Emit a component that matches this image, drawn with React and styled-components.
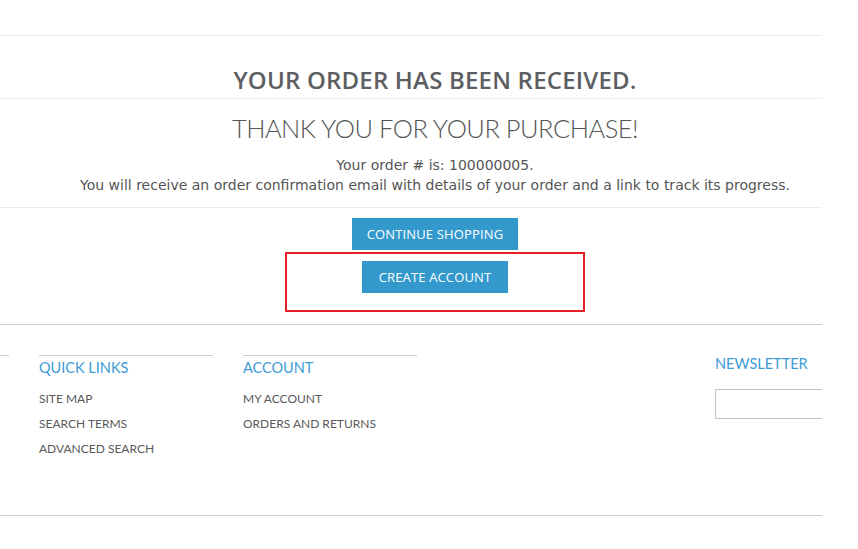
import React from "react";
import styled, { createGlobalStyle } from "styled-components";

const Global = createGlobalStyle`
  html, body { margin: 0; padding: 0; background: #fff; overflow: hidden; }
  *, *::before, *::after { box-sizing: border-box; }
`;

const Page = styled.div`
  width: 822px;
  font-family: "Open Sans", "DejaVu Sans", sans-serif;
`;

const TopBar = styled.div`
  height: 36px;
  border-bottom: 1px solid #ebebeb;
`;

const TitleBlock = styled.div`
  height: 63px;
  padding: 29px 0 0 48px;
  text-align: center;
  border-bottom: 1px solid #ebebeb;
`;

const Title = styled.h1`
  margin: 0;
  font-family: "Open Sans", sans-serif;
  font-weight: 600;
  font-size: 24px;
  line-height: 30px;
  color: #5c5e62;
  letter-spacing: 0.2px;
`;

const Success = styled.div`
  height: 109px;
  padding: 13px 0 0 48px;
  text-align: center;
  border-bottom: 1px solid #ebebeb;
`;

const Thanks = styled.h2`
  margin: 0 0 11px;
  font-family: "Lato", sans-serif;
  font-weight: 300;
  font-size: 25.5px;
  line-height: 32px;
  letter-spacing: -0.5px;
  color: #555;
`;

const Info = styled.p`
  margin: 0;
  font-family: "DejaVu Sans", Verdana, sans-serif;
  font-size: 14px;
  line-height: 20px;
  color: #555;
`;

const Actions = styled.div`
  height: 117px;
  padding: 10px 0 0 48px;
  display: flex;
  flex-direction: column;
  align-items: center;
  gap: 11px;
  border-bottom: 1px solid #cccccc;
`;

const Button = styled.button`
  height: 32px;
  padding: 0 ${(p) => p.$pad}px;
  border: 0;
  background: #3399cc;
  color: #fff;
  font-family: "Open Sans", sans-serif;
  font-size: 13px;
  letter-spacing: 0.15px;
  cursor: pointer;
`;

const Highlight = styled.div`
  position: relative;
  &::after {
    content: "";
    position: absolute;
    left: -77px;
    top: -9px;
    width: 300px;
    height: 60px;
    border: 2px solid #e8202a;
    pointer-events: none;
  }
`;

const Footer = styled.footer`
  height: 191px;
  display: flex;
  padding-top: 30px;
  border-bottom: 1px solid #cccccc;
`;

const Column = styled.div`
  width: ${(p) => p.$w}px;
  margin-left: ${(p) => p.$ml}px;
  margin-top: ${(p) => p.$mt || 0}px;
  border-top: ${(p) => (p.$line ? "1px solid #cccccc" : "none")};
  padding-top: ${(p) => p.$pt}px;
  align-self: flex-start;
`;

const ColTitle = styled.h3`
  margin: 0 0 ${(p) => p.$mb || 13}px;
  font-family: "Lato", sans-serif;
  font-weight: 400;
  font-size: 14.5px;
  line-height: 20px;
  color: #3d9bd6;
`;

const LinkList = styled.ul`
  list-style: none;
  margin: 0;
  padding: 0;
  display: flex;
  flex-direction: column;
  gap: 9px;
`;

const Link = styled.li`
  font-family: "Lato", sans-serif;
  font-size: 12px;
  line-height: 16px;
  color: #5a5a5a;
`;

const EmailInput = styled.input`
  display: block;
  width: 120px;
  height: 30px;
  border: 1px solid #c2c2c2;
  border-right: 0;
  outline: none;
  background: #fff;
`;

const Clip = styled.div`
  width: 107px;
  overflow: hidden;
`;

export default function App() {
  return (
    <Page>
      <Global />
      <TopBar />
      <TitleBlock>
        <Title>YOUR ORDER HAS BEEN RECEIVED.</Title>
      </TitleBlock>
      <Success>
        <Thanks>THANK YOU FOR YOUR PURCHASE!</Thanks>
        <Info>Your order # is: 100000005.</Info>
        <Info>
          You will receive an order confirmation email with details of your order and a link to track its progress.
        </Info>
      </Success>
      <Actions>
        <Button $pad={15}>CONTINUE SHOPPING</Button>
        <Highlight>
          <Button $pad={17}>CREATE ACCOUNT</Button>
        </Highlight>
      </Actions>
      <Footer>
        <Column $w={9} $ml={0} $line $pt={0} />
        <Column $w={174} $ml={30} $line $pt={2}>
          <ColTitle>QUICK LINKS</ColTitle>
          <LinkList>
            <Link>SITE MAP</Link>
            <Link>SEARCH TERMS</Link>
            <Link>ADVANCED SEARCH</Link>
          </LinkList>
        </Column>
        <Column $w={174} $ml={30} $line $pt={2}>
          <ColTitle>ACCOUNT</ColTitle>
          <LinkList>
            <Link>MY ACCOUNT</Link>
            <Link>ORDERS AND RETURNS</Link>
          </LinkList>
        </Column>
        <Column $w={107} $ml={298} $mt={-1} $pt={0}>
          <ColTitle $mb={15}>NEWSLETTER</ColTitle>
          <Clip>
            <EmailInput type="text" />
          </Clip>
        </Column>
      </Footer>
    </Page>
  );
}
